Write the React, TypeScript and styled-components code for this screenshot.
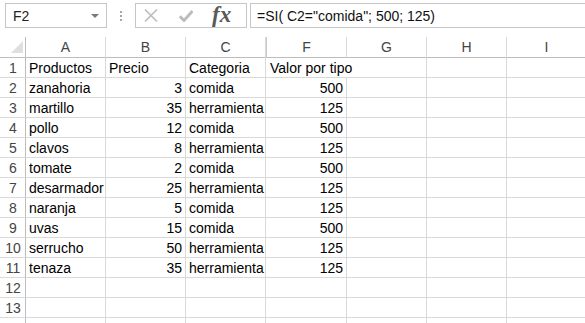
import React from "react";
import styled, { createGlobalStyle } from "styled-components";

const Global = createGlobalStyle`
  html, body { margin: 0; padding: 0; background: #fff; }
  body { font-family: "Liberation Sans", Arial, sans-serif; overflow: hidden; }
`;

const Page = styled.div`
  width: 585px;
  height: 323px;
  overflow: hidden;
  background: #fff;
`;

const TopBar = styled.div`
  display: flex;
  align-items: flex-start;
  height: 37px;
  padding: 3px 0 0 5px;
  box-sizing: border-box;
`;

const NameBox = styled.div`
  position: relative;
  width: 102px;
  height: 25px;
  box-sizing: border-box;
  border: 1px solid #c6c6c6;
  display: flex;
  align-items: center;
  padding-left: 7px;
  font-size: 14px;
  color: #222;
`;

const DropArrow = styled.span`
  position: absolute;
  right: 7px;
  top: 10px;
  width: 0;
  height: 0;
  border-left: 4px solid transparent;
  border-right: 4px solid transparent;
  border-top: 4px solid #7a7a7a;
`;

const Grip = styled.div`
  width: 2px;
  margin: 8px 13px 0 13px;
  display: flex;
  flex-direction: column;
  gap: 2px;
`;

const GripDot = styled.span`
  width: 2px;
  height: 2px;
  background: #a6a6a6;
`;

const ButtonBox = styled.div`
  width: 112px;
  height: 25px;
  box-sizing: border-box;
  border: 1px solid #c6c6c6;
  display: flex;
  align-items: center;
  padding-left: 8px;
`;

const IconSlot = styled.span<{ $w: number; $gap?: number }>`
  width: ${(p) => p.$w}px;
  margin-left: ${(p) => p.$gap ?? 0}px;
  display: flex;
  align-items: center;
  justify-content: center;
`;

const Fx = styled.span`
  font-family: "Liberation Serif", "DejaVu Serif", serif;
  font-style: italic;
  font-weight: bold;
  font-size: 23px;
  line-height: 23px;
  color: #595959;
  margin-left: 19px;
  margin-top: -3px;
  letter-spacing: 0px;
`;

const FormulaBar = styled.div`
  flex: 1;
  margin-left: 3px;
  height: 25px;
  box-sizing: border-box;
  border: 1px solid #c6c6c6;
  border-right: none;
  display: flex;
  align-items: center;
  padding-left: 6px;
  font-size: 14px;
  color: #111;
  white-space: nowrap;
`;

const Sheet = styled.div`
  display: grid;
  grid-template-columns: 26px 80px 80px 80px 1px 80px 80px 80px 80px;
  grid-template-rows: 21px;
  grid-auto-rows: 20px;
  font-size: 14px;
`;

const ColHead = styled.div<{ $hidden?: boolean }>`
  box-sizing: border-box;
  border-right: 1px solid ${(p) => (p.$hidden ? "#c8c8c8" : "#dadada")};
  border-bottom: 1px solid #bdbdbd;
  display: flex;
  align-items: center;
  justify-content: center;
  color: #444;
  padding-bottom: 1px;
`;

const Corner = styled.div`
  box-sizing: border-box;
  border-right: 1px solid #bdbdbd;
  border-bottom: 1px solid #bdbdbd;
  position: relative;
`;

const CornerTri = styled.span`
  position: absolute;
  left: 11px;
  top: 4px;
  width: 0;
  height: 0;
  border-left: 12px solid transparent;
  border-bottom: 12px solid #dfdfdf;
`;

const RowHead = styled.div`
  box-sizing: border-box;
  border-right: 1px solid #bdbdbd;
  border-bottom: 1px solid #dadada;
  display: flex;
  align-items: center;
  justify-content: center;
  color: #444;
  padding-left: 1px;
`;

const Cell = styled.div<{ $align?: "left" | "right"; $noRight?: boolean; $gap?: boolean }>`
  box-sizing: border-box;
  border-right: ${(p) => (p.$noRight || p.$gap ? "none" : "1px solid #d9d9d9")};
  border-bottom: 1px solid #d9d9d9;
  display: flex;
  align-items: center;
  justify-content: ${(p) => (p.$align === "right" ? "flex-end" : "flex-start")};
  padding: 0 3px 0 3px;
  white-space: nowrap;
  overflow: visible;
  color: #000;
  position: relative;
  z-index: 1;
`;

const XIcon = () => (
  <svg width="14" height="13" viewBox="0 0 14 13">
    <path d="M1 0.5 L13 12.5 M13 0.5 L1 12.5" stroke="#bdbdbd" strokeWidth="1.6" fill="none" />
  </svg>
);

const CheckIcon = () => (
  <svg width="14" height="12" viewBox="0 0 14 12">
    <path d="M0.8 6.2 L5 10.5 L13.5 1" stroke="#bdbdbd" strokeWidth="3" fill="none" />
  </svg>
);

type Row = [string, string, string, string];

const data: Row[] = [
  ["Productos", "Precio", "Categoria", "Valor por tipo"],
  ["zanahoria", "3", "comida", "500"],
  ["martillo", "35", "herramienta", "125"],
  ["pollo", "12", "comida", "500"],
  ["clavos", "8", "herramienta", "125"],
  ["tomate", "2", "comida", "500"],
  ["desarmador", "25", "herramienta", "125"],
  ["naranja", "5", "comida", "125"],
  ["uvas", "15", "comida", "500"],
  ["serrucho", "50", "herramienta", "125"],
  ["tenaza", "35", "herramienta", "125"],
  ["", "", "", ""],
  ["", "", "", ""],
  ["", "", "", ""],
];

const cols = ["A", "B", "C", "", "F", "G", "H", "I"];

export default function App() {
  return (
    <Page>
      <Global />
      <TopBar>
        <NameBox>
          F2
          <DropArrow />
        </NameBox>
        <Grip>
          <GripDot />
          <GripDot />
          <GripDot />
        </Grip>
        <ButtonBox>
          <IconSlot $w={14}>
            <XIcon />
          </IconSlot>
          <IconSlot $w={14} $gap={21}>
            <CheckIcon />
          </IconSlot>
          <Fx>fx</Fx>
        </ButtonBox>
        <FormulaBar>=SI( C2="comida"; 500; 125)</FormulaBar>
      </TopBar>
      <Sheet>
        <Corner>
          <CornerTri />
        </Corner>
        {cols.map((c, i) => (
          <ColHead key={i} $hidden={c === ""}>
            {c}
          </ColHead>
        ))}
        {data.map((r, i) => {
          const header = i === 0;
          return (
            <React.Fragment key={i}>
              <RowHead>{i < 13 ? i + 1 : ""}</RowHead>
              <Cell>{r[0]}</Cell>
              <Cell $align={header ? "left" : "right"}>{r[1]}</Cell>
              <Cell>{r[2]}</Cell>
              <Cell $gap />
              <Cell $align={header ? "left" : "right"} $noRight={header}>
                {r[3]}
              </Cell>
              <Cell />
              <Cell />
              <Cell />
            </React.Fragment>
          );
        })}
      </Sheet>
    </Page>
  );
}
